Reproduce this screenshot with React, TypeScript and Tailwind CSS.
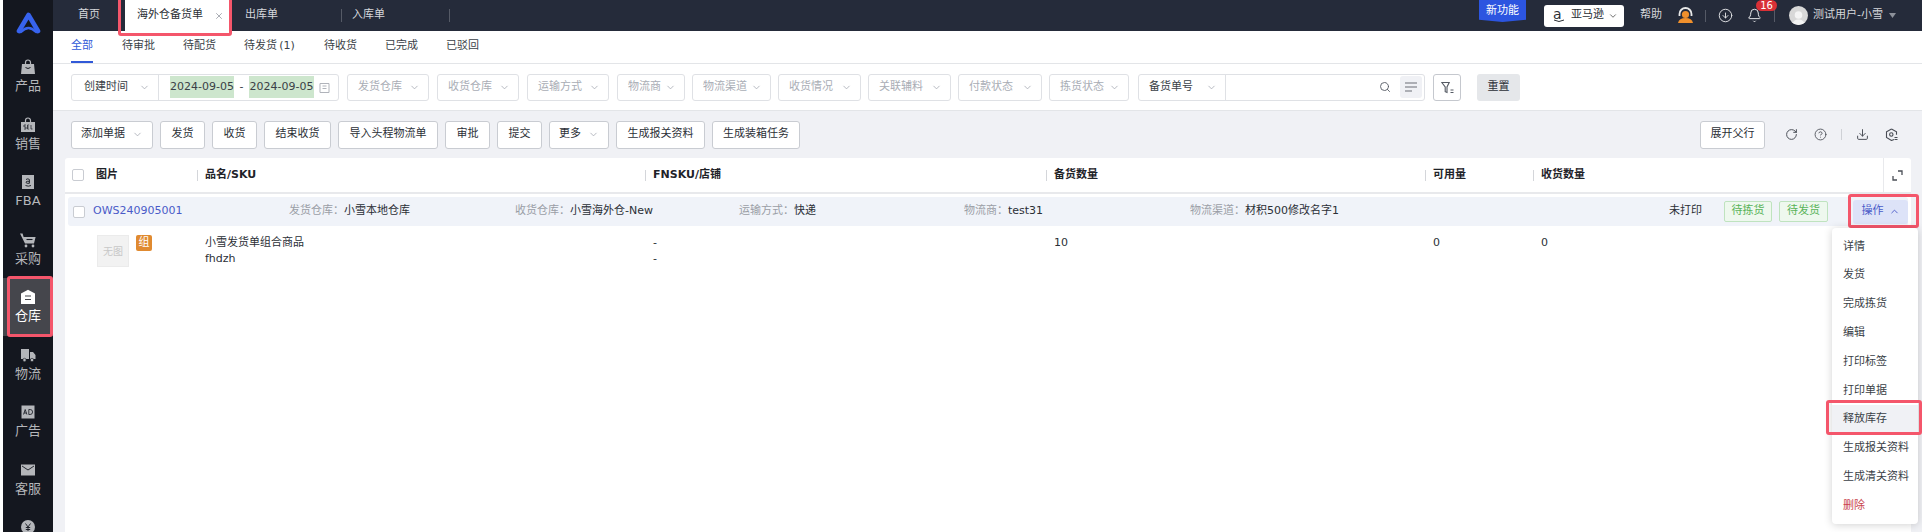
import React from "react";
import { ChevronDown, ChevronUp, Search, X, RotateCw, CircleHelp, Download, CircleArrowDown, Bell } from "lucide-react";

const FONT = "font-['DejaVu_Sans','Noto_Sans_CJK_SC',sans-serif]";

function NavIcon({ kind, active }: { kind: string; active?: boolean }) {
  const c = active ? "#ffffff" : "#b4b6ba";
  const d = active ? "#45464c" : "#14171f";
  return (
    <svg width="16" height="16" viewBox="0 0 16 16">
      {kind === "bag" && (
        <>
          <path d="M2 5h12l1 10H1z" fill={c} />
          <path d="M5.5 5V3.5a2.5 2.5 0 0 1 5 0V5" fill="none" stroke={c} strokeWidth="1.2" />
          <path d="M5.5 8.5q2.5 2 5 0" fill="none" stroke={d} strokeWidth="1" />
        </>
      )}
      {kind === "sel" && (
        <>
          <path d="M1 5h14v10H1z" fill={c} />
          <path d="M5.5 5V3.5a2.5 2.5 0 0 1 5 0V5" fill="none" stroke={c} strokeWidth="1.2" />
          <path d="M4 8h2M4 8v2h2v2H4M7.5 8v4h1.6M7.5 10h1.4M7.5 8h1.6M11 8v4h1.5" fill="none" stroke={d} strokeWidth=".7" />
        </>
      )}
      {kind === "fba" && (
        <>
          <path d="M2 1h12v14H2z" fill={c} />
          <path d="M6 5.5q2-1.4 3.4 0v3.8M9.4 7.3H7.2a1 1 0 0 0 0 2h2.2M5.5 11.5q3 1.4 5.5 0" fill="none" stroke={d} strokeWidth=".9" />
        </>
      )}
      {kind === "cart" && (
        <>
          <path d="M0 1.5h2.6l1 3.5h12l-1.6 6.5H5z" fill={c} />
          <circle cx="6" cy="14" r="1.4" fill={c} />
          <circle cx="13" cy="14" r="1.4" fill={c} />
          <path d="M6.5 7.5h6" stroke={d} strokeWidth="1.1" />
        </>
      )}
      {kind === "home" && (
        <>
          <path d="M8 .8 15 4.6V15H1V4.6z" fill={c} />
          <path d="M5 7h6M5 10.5h6" stroke={d} strokeWidth="1.2" />
        </>
      )}
      {kind === "truck" && (
        <>
          <path d="M1 2h8v10H1zM10 5h3l2.5 3v4H10z" fill={c} />
          <circle cx="4.5" cy="13" r="1.7" fill={c} stroke={d} strokeWidth=".6" />
          <circle cx="12" cy="13" r="1.7" fill={c} stroke={d} strokeWidth=".6" />
        </>
      )}
      {kind === "ad" && (
        <>
          <path d="M1.5 1.500h13v13h-13z" fill={c} />
          <path d="M3.500 10.500 5.200 5.500l1.700 5M4 9h2.400M8.800 5.500v5h1.300a2.500 2.500 0 0 0 0-5z" fill="none" stroke={d} strokeWidth=".8" />
        </>
      )}
      {kind === "mail" && (
        <>
          <path d="M1 2.500h14v11H1z" fill={c} />
          <path d="M2 4l6 4 6-4" fill="none" stroke={d} strokeWidth=".9" />
        </>
      )}
      {kind === "yen" && (
        <>
          <circle cx="8" cy="8" r="7" fill={c} />
          <path d="M5.500 4.500 8 8l2.500-3.500M8 8v4M5.800 8.500h4.400M5.800 10.500h4.400" fill="none" stroke={d} strokeWidth=".9" />
        </>
      )}
    </svg>
  );
}

const NAV = [
  ["bag", "产品"],
  ["sel", "销售"],
  ["fba", "FBA"],
  ["cart", "采购"],
  ["home", "仓库"],
  ["truck", "物流"],
  ["ad", "广告"],
  ["mail", "客服"],
  ["yen", ""],
];

function Sidebar() {
  return (
    <aside className="ml-[3px] w-[50px] shrink-0 bg-[#14171f] h-[532px] overflow-hidden">
      <div className="h-[48px] flex justify-center pt-[12px]">
        <svg width="25" height="22" viewBox="0 0 25 22">
          <path d="M3 19 12.500 3 22 19" fill="none" stroke="#3763ee" strokeWidth="4.600" strokeLinecap="round" strokeLinejoin="round" />
          <path d="M5 20q7.500-8 15 0" fill="none" stroke="#3763ee" strokeWidth="2.400" strokeLinecap="round" />
        </svg>
      </div>
      {NAV.map(([k, l]) => {
        const active = l === "仓库";
        return (
          <div key={k} className={`relative h-[57.5px] flex flex-col items-center pt-[11px] ${active ? "bg-[#45464c]" : ""}`}>
            <NavIcon kind={k} active={active} />
            {l && <span className={`text-[13px] leading-[20px] mt-[1px] ${active ? "text-white" : "text-[#b4b6ba]"}`}>{l}</span>}
            {active && <span className="absolute left-[4px] right-0 -top-[2px] -bottom-[1px] border-[3px] border-[#f4566b] rounded-[3px]" />}
          </div>
        );
      })}
    </aside>
  );
}

function TopBar() {
  return (
    <header className="h-[31px] shrink-0 bg-[#252b3a] flex items-center text-[11px] text-[#d5d7db]">
      <span className="ml-[25px] w-[44px]">首页</span>
      <div className="relative h-full w-[108px] bg-white border-l-[3px] border-[#252b3a] flex items-center pl-[12px] text-[#2b2f36]">
        海外仓备货单
        <X size={10} strokeWidth={2} className="absolute right-[6px] top-[11px] text-[#9a9ea6]" />
        <span className="absolute -left-[7px] -right-[2px] -top-[3px] -bottom-[5px] border-[3px] border-[#f4566b] rounded-[3px]" />
      </div>
      <span className="ml-[15px] w-[96px]">出库单</span>
      <span className="w-px h-[13px] bg-[#555a66]" />
      <span className="ml-[10px] w-[97px]">入库单</span>
      <span className="w-px h-[13px] bg-[#555a66]" />
      <div className="ml-auto flex items-center h-full">
        <div className="h-[22px] w-[47px] self-start bg-[#2c55e0] rounded-b-[2px] flex items-center justify-center text-white [clip-path:polygon(0_0,100%_0,100%_90%,50%_100%,0_90%)]">新功能</div>
        <div className="ml-[18px] w-[80px] h-[22px] bg-white rounded-[3px] flex items-center pl-[9px] text-[#2b2f36]">
          <span className="relative text-[14px] leading-none w-[13px] -mt-[3px]">a<svg className="absolute left-0 top-[12px]" width="12" height="4" viewBox="0 0 12 4"><path d="M1 1q5 3 10 0" fill="none" stroke="#2b2f36" strokeWidth="1" /></svg></span>
          <span className="ml-[5px]">亚马逊</span>
          <ChevronDown size={10} className="ml-[4px] text-[#555]" />
        </div>
        <span className="ml-[16px]">帮助</span>
        <svg className="ml-[16px]" width="15" height="17" viewBox="0 0 15 17">
          <path d="M1.500 9V7a6 6 0 0 1 12 0v2" fill="none" stroke="#e8e8e8" strokeWidth="1.800" />
          <circle cx="7.500" cy="7.500" r="3.600" fill="#f0902c" />
          <path d="M0 16q1-5 7.500-5T15 16z" fill="#f0902c" />
        </svg>
        <span className="ml-[12px] w-px h-[12px] bg-[#555a66]" />
        <CircleArrowDown size={15} strokeWidth={1.500} className="ml-[12px] text-[#e4e5e8]" />
        <div className="relative ml-[14px] w-[15px]">
          <Bell size={15} strokeWidth={1.600} className="text-[#e4e5e8]" />
          <span className="absolute left-[9px] -top-[8px] w-[21px] h-[11px] rounded-[6px] bg-[#d93036] text-white text-[10px] leading-[11px] text-center">16</span>
        </div>
        <span className="ml-[12px] w-px h-[12px] bg-[#555a66]" />
        <span className="ml-[14px] w-[19px] h-[19px] rounded-full bg-[#d8d8d8] flex items-end justify-center overflow-hidden">
          <svg width="13" height="16" viewBox="0 0 13 16"><circle cx="6.500" cy="6" r="3.800" fill="#f4f4f4" /><path d="M0 16q1-5.500 6.500-5.500T13 16z" fill="#f4f4f4" /></svg>
        </span>
        <span className="ml-[5px] w-[76px] whitespace-nowrap">测试用户-小雪</span>
        <svg width="7" height="5" viewBox="0 0 7 5"><path d="M0 0h7L3.500 5z" fill="#8d919a" /></svg>
        <span className="w-[26px]" />
      </div>
    </header>
  );
}

const TABS = [
  ["全部", "w-[51px]"],
  ["待审批", "w-[61px]"],
  ["待配货", "w-[61px]"],
  ["待发货\u2009(1)", "w-[80px]"],
  ["待收货", "w-[61px]"],
  ["已完成", "w-[61px]"],
  ["已驳回", "w-[40px]"],
];

function Tabs() {
  return (
    <div className="h-[33px] shrink-0 bg-white border-b border-[#e3e5e8] flex pl-[18px] text-[11px] text-[#3a3f47]">
      {TABS.map(([t, w], i) => (
        <div key={t} className={`${w} h-full`}>
          <span className={`inline-flex h-full items-center border-b-[2px] ${i === 0 ? "border-[#3159d8] text-[#3159d8]" : "border-transparent"}`}>{t}</span>
        </div>
      ))}
    </div>
  );
}

function Caret() {
  return <ChevronDown size={11} strokeWidth={1.800} className="text-[#a9adb5] shrink-0" />;
}

function Sel({ label, w }: { label: string; w: string }) {
  return (
    <div className={`${w} h-[27px] shrink-0 border border-[#dfe1e5] rounded-[3px] flex items-center justify-between pl-[10px] pr-[8px] text-[#a9adb5]`}>
      <span className="whitespace-nowrap">{label}</span>
      <Caret />
    </div>
  );
}

function FilterRow() {
  return (
    <div className="h-[47px] shrink-0 bg-white border-b border-[#e3e5e8] flex items-center pl-[18px] text-[11px]">
      <div className="w-[268px] h-[27px] shrink-0 border border-[#dfe1e5] rounded-[3px] flex items-center text-[#3a3f47]">
        <div className="w-[87px] h-full border-r border-[#dfe1e5] flex items-center justify-between pl-[12px] pr-[8px]">
          <span>创建时间</span>
          <Caret />
        </div>
        <span className="ml-[11px] bg-[#cde6cd] h-[22px] w-[64px] flex items-center justify-center whitespace-nowrap">2024-09-05</span>
        <span className="w-[15px] text-center">-</span>
        <span className="bg-[#cde6cd] h-[22px] w-[65px] flex items-center justify-center whitespace-nowrap">2024-09-05</span>
        <svg className="ml-[5px]" width="11" height="11" viewBox="0 0 11 11"><path d="M1 1.500h9v9H1zM3.500 4h4M3.500 6.500h4" fill="none" stroke="#b0b3ba" strokeWidth="1" /></svg>
      </div>
      <div className="flex gap-[7px] ml-[8px]">
        <Sel label="发货仓库" w="w-[82px] mr-[1px]" />
        <Sel label="收货仓库" w="w-[82px] mr-[1px]" />
        <Sel label="运输方式" w="w-[82px] mr-[1px]" />
        <Sel label="物流商" w="w-[68px]" />
        <Sel label="物流渠道" w="w-[79px]" />
        <Sel label="收货情况" w="w-[83px]" />
        <Sel label="关联辅料" w="w-[83px]" />
        <Sel label="付款状态" w="w-[84px]" />
        <Sel label="拣货状态" w="w-[80px]" />
      </div>
      <div className="ml-[9px] w-[287px] h-[27px] shrink-0 border border-[#dfe1e5] rounded-[3px] flex items-center text-[#3a3f47]">
        <div className="w-[87px] h-full border-r border-[#dfe1e5] flex items-center justify-between pl-[10px] pr-[8px]">
          <span>备货单号</span>
          <Caret />
        </div>
        <Search size={12} strokeWidth={1.800} className="ml-auto text-[#555a63]" />
        <div className="ml-[9px] mr-[2px] w-[22px] h-[22px] rounded-[3px] bg-[#f0f1f5] flex items-center justify-center">
          <svg width="12" height="10" viewBox="0 0 12 10"><path d="M0 1h12M0 5h12M0 9h7" stroke="#6a6e76" strokeWidth="1.200" /></svg>
        </div>
      </div>
      <div className="ml-[8px] w-[28px] h-[27px] border border-[#c5c8ce] rounded-[3px] flex items-center justify-center">
        <svg width="13" height="13" viewBox="0 0 13 13"><path d="M.8 1.500h7.400L6 6v5.500l-1.800-.8V6z" fill="none" stroke="#555a63" strokeWidth="1.100" /><path d="M9.500 9h3M9.500 11.500h3" stroke="#555a63" strokeWidth="1" /></svg>
      </div>
      <div className="ml-[16px] w-[43px] h-[27px] bg-[#e5e7ea] rounded-[3px] flex items-center justify-center text-[#2b2f36]">重置</div>
    </div>
  );
}

function Btn({ children, w }: { children: React.ReactNode; w: string }) {
  return (
    <div className={`${w} h-[28px] shrink-0 bg-white border border-[#c9ccd2] rounded-[3px] flex items-center justify-center gap-[7px] text-[#2b2f36] whitespace-nowrap`}>{children}</div>
  );
}

function ActionRow() {
  return (
    <div className="h-[47px] shrink-0 flex items-center pl-[18px] pr-[24px] text-[11px]">
      <div className="flex gap-[7px]">
        <Btn w="w-[82px]">添加单据<Caret /></Btn>
        <Btn w="w-[45px]">发货</Btn>
        <Btn w="w-[45px]">收货</Btn>
        <Btn w="w-[67px]">结束收货</Btn>
        <Btn w="w-[100px]">导入头程物流单</Btn>
        <Btn w="w-[45px]">审批</Btn>
        <Btn w="w-[45px]">提交</Btn>
        <Btn w="w-[60px]">更多<Caret /></Btn>
        <Btn w="w-[89px]">生成报关资料</Btn>
        <Btn w="w-[88px]">生成装箱任务</Btn>
      </div>
      <div className="ml-auto flex items-center text-[#4a4e56]">
        <Btn w="w-[65px]">展开父行</Btn>
        <RotateCw size={13} strokeWidth={1.800} className="ml-[20px]" />
        <CircleHelp size={13} strokeWidth={1.600} className="ml-[16px]" />
        <span className="ml-[14px] w-px h-[11px] bg-[#cfd1d6]" />
        <Download size={13} strokeWidth={1.800} className="ml-[14px]" />
        <svg className="ml-[16px]" width="13" height="13" viewBox="0 0 13 13">
          <path d="M6.500 1 11.500 3.800v3M9 11.600l-2.500.9L1.500 9.500V3.800L6.500 1" fill="none" stroke="#4a4e56" strokeWidth="1.100" />
          <circle cx="6.300" cy="6.500" r="1.700" fill="none" stroke="#4a4e56" strokeWidth="1.100" />
          <path d="M9.500 9.500h3M9.500 11.500h3" stroke="#4a4e56" strokeWidth="1" />
        </svg>
      </div>
    </div>
  );
}

const COLS = [
  ["图片", "w-[132px] pl-[31px]", true],
  ["品名/SKU", "w-[448px]", false],
  ["FNSKU/店铺", "w-[401px]", false],
  ["备货数量", "w-[379px]", false],
  ["可用量", "w-[108px]", false],
  ["收货数量", "w-[350px]", false],
] as const;

function Check({ cls }: { cls: string }) {
  return <span className={`${cls} block w-[12px] h-[12px] shrink-0 bg-white border border-[#c9ccd2] rounded-[2px]`} />;
}

function Cell({ label, value, w }: { label: string; value: string; w: string }) {
  return (
    <div className={`${w} shrink-0 whitespace-nowrap`}>
      <span className="text-[#9a9ea6]">{label}：</span>
      <span className="text-[#2b2f36]">{value}</span>
    </div>
  );
}

const MENU = ["详情", "发货", "完成拣货", "编辑", "打印标签", "打印单据", "释放库存", "生成报关资料", "生成清关资料", "删除"];

function Menu() {
  return (
    <div className="absolute z-10 left-[-21px] top-[28px] w-[86px] h-[296px] bg-white rounded-[4px] shadow-[0_1px_8px_rgba(0,0,0,0.18)] pt-[5px] text-[11px]">
      {MENU.map((m) => {
        const hot = m === "释放库存";
        return (
          <div key={m} className={`relative h-[28.800px] flex items-center pl-[11px] whitespace-nowrap ${hot ? "bg-[#f0f1f5] text-[#3a3f47]" : m === "删除" ? "text-[#c9444c]" : "text-[#3a3f47]"}`}>
            {m}
            {hot && <span className="absolute -left-[6px] -right-[4px] -top-[5px] -bottom-[1px] border-[3px] border-[#f4566b] rounded-[3px]" />}
          </div>
        );
      })}
    </div>
  );
}

function Table() {
  return (
    <div className="ml-[12px] mr-[11px] flex-1 bg-white rounded-t-[3px] text-[11px] text-[#2b2f36]">
      <div className="h-[36px] border-b-[2px] border-[#e8e9ec] flex items-center">
        <Check cls="ml-[7px] -mr-[19px]" />
        {COLS.map(([t, w, first]) => (
          <div key={t} className={`${w} shrink-0 font-bold text-[#1f2329] flex items-center`}>
            {!first && <span className="w-px h-[11px] bg-[#d4d6da] mr-[7px]" />}
            {t}
          </div>
        ))}
        <div className="flex-1 h-full border-l border-[#e8e9ec] flex items-center justify-center">
          <svg width="11" height="11" viewBox="0 0 11 11"><path d="M6 1h4v4M5 10H1V6" fill="none" stroke="#4a4e56" strokeWidth="1.300" /></svg>
        </div>
      </div>
      <div className="mt-[3px] mx-[3px] h-[29px] bg-[#f0f3f9] rounded-[3px] flex items-center">
        <Check cls="ml-[5px]" />
        <span className="ml-[8px] w-[196px] shrink-0 text-[#4a5bc8]">OWS240905001</span>
        <Cell label="发货仓库" value="小雪本地仓库" w="w-[226px]" />
        <Cell label="收货仓库" value="小雪海外仓-New" w="w-[224px]" />
        <Cell label="运输方式" value="快递" w="w-[225px]" />
        <Cell label="物流商" value="test31" w="w-[226px]" />
        <Cell label="物流渠道" value="材积500修改名字1" w="w-[200px]" />
        <span className="ml-auto whitespace-nowrap">未打印</span>
        <span className="ml-[22px] w-[48px] h-[21px] border border-[#bfe3bf] bg-[#eef8ee] text-[#58b358] rounded-[2px] flex items-center justify-center">待拣货</span>
        <span className="ml-[7px] w-[49px] h-[21px] border border-[#bfe3bf] bg-[#eef8ee] text-[#58b358] rounded-[2px] flex items-center justify-center">待发货</span>
        <div className="relative ml-[25px] w-[55px] h-[24px] bg-[#dde3f8] text-[#4a5bc8] rounded-[3px] flex items-center justify-center gap-[5px]">
          操作<ChevronUp size={11} strokeWidth={2} />
          <span className="absolute -left-[5px] -right-[11px] -top-[6px] -bottom-[4px] border-[3px] border-[#f4566b] rounded-[3px]" />
          <Menu />
        </div>
      </div>
      <div className="flex pt-[9px]">
        <div className="w-[132px] shrink-0 flex items-start pl-[32px]">
          <div className="w-[32px] h-[32px] bg-[#f2f2f2] border border-[#ebebeb] flex items-center justify-center text-[10px] text-[#c8c8c8]">无图</div>
          <span className="ml-[7px] w-[16px] h-[16px] bg-[#e08a30] text-white rounded-[2px] flex items-center justify-center text-[11px]">组</span>
        </div>
        <div className="w-[448px] shrink-0 pl-[8px] leading-[16px]">
          <div>小雪发货单组合商品</div>
          <div>fhdzh</div>
        </div>
        <div className="w-[401px] shrink-0 pl-[8px] leading-[16px]">
          <div>-</div>
          <div>-</div>
        </div>
        <div className="w-[379px] shrink-0 pl-[8px] leading-[16px]">10</div>
        <div className="w-[108px] shrink-0 pl-[8px] leading-[16px]">0</div>
        <div className="w-[350px] shrink-0 pl-[8px] leading-[16px]">0</div>
      </div>
    </div>
  );
}

export default function App() {
  return (
    <div className={`${FONT} flex w-[1922px] h-[532px] overflow-hidden bg-white`}>
      <Sidebar />
      <main className="flex-1 min-w-0 flex flex-col bg-[#f0f1f5]">
        <TopBar />
        <Tabs />
        <FilterRow />
        <ActionRow />
        <Table />
      </main>
    </div>
  );
}
